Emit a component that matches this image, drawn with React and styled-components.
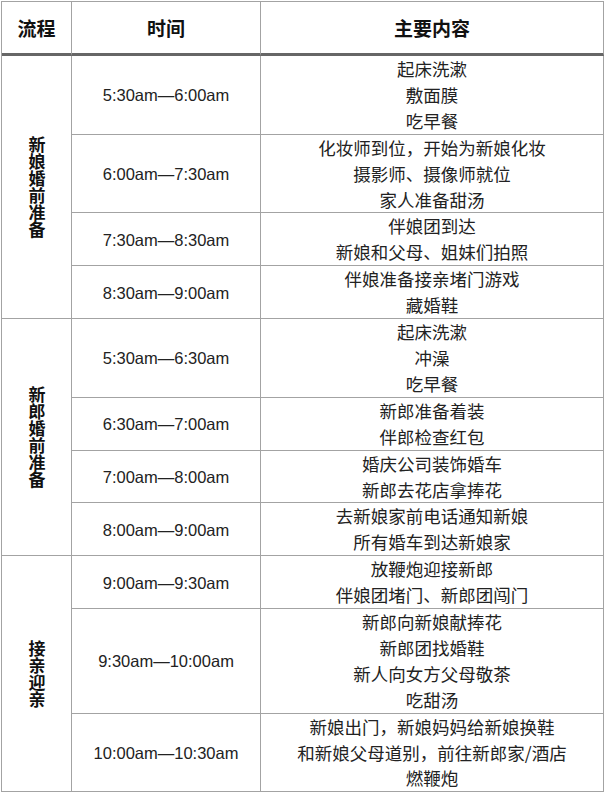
import React from "react";
import styled, { createGlobalStyle } from "styled-components";

const GlobalStyle = createGlobalStyle`
	html, body {
		margin: 0;
		padding: 0;
		background: #ffffff;
	}
	body {
		font-family: "Noto Sans CJK SC", "Liberation Sans", sans-serif;
		color: #1f1f1f;
	}
`;

const PageStyled = styled.div`
	padding: 1px 0 0 1px;
`;

const TableStyled = styled.div`
	display: grid;
	grid-template-columns: 70px 189px 343px;
	border-left: 1px solid #a3a3a3;
	border-top: 1px solid #a3a3a3;
	width: max-content;
`;

const HeadCell = styled.div`
	box-sizing: border-box;
	height: 54px;
	display: flex;
	align-items: center;
	justify-content: center;
	border-right: 1px solid #a3a3a3;
	border-bottom: 3px solid #666666;
	font-size: 19px;
	font-weight: 700;
	color: #111;
`;

const Cell = styled.div`
	box-sizing: border-box;
	display: flex;
	flex-direction: column;
	align-items: center;
	justify-content: center;
	border-right: 1px solid #a3a3a3;
	border-bottom: 1px solid #a3a3a3;
	text-align: center;
`;

const StageCell = styled(Cell)`
	grid-row: span ${(p) => p.$span};
`;

const StageText = styled.span`
	writing-mode: vertical-rl;
	text-orientation: upright;
	font-size: 17px;
	line-height: 18px;
	font-weight: 700;
	color: #111;
	letter-spacing: 0;
`;

const TimeCell = styled(Cell)`
	font-family: "Liberation Sans", Arial, sans-serif;
	font-size: 16.5px;
	color: #222;
	padding-top: 2px;
`;

const ContentCell = styled(Cell)`
	font-size: 17.5px;
	color: #222;
`;

const Line = styled.div`
	line-height: 25.9px;
	white-space: nowrap;
`;

const groups = [
	{
		stage: "新娘婚前准备",
		rows: [
			{ time: "5:30am—6:00am", items: ["起床洗漱", "敷面膜", "吃早餐"] },
			{ time: "6:00am—7:30am", items: ["化妆师到位，开始为新娘化妆", "摄影师、摄像师就位", "家人准备甜汤"] },
			{ time: "7:30am—8:30am", items: ["伴娘团到达", "新娘和父母、姐妹们拍照"] },
			{ time: "8:30am—9:00am", items: ["伴娘准备接亲堵门游戏", "藏婚鞋"] },
		],
	},
	{
		stage: "新郎婚前准备",
		rows: [
			{ time: "5:30am—6:30am", items: ["起床洗漱", "冲澡", "吃早餐"] },
			{ time: "6:30am—7:00am", items: ["新郎准备着装", "伴郎检查红包"] },
			{ time: "7:00am—8:00am", items: ["婚庆公司装饰婚车", "新郎去花店拿捧花"] },
			{ time: "8:00am—9:00am", items: ["去新娘家前电话通知新娘", "所有婚车到达新娘家"] },
		],
	},
	{
		stage: "接亲迎亲",
		rows: [
			{ time: "9:00am—9:30am", items: ["放鞭炮迎接新郎", "伴娘团堵门、新郎团闯门"] },
			{ time: "9:30am—10:00am", items: ["新郎向新娘献捧花", "新郎团找婚鞋", "新人向女方父母敬茶", "吃甜汤"] },
			{ time: "10:00am—10:30am", items: ["新娘出门，新娘妈妈给新娘换鞋", "和新娘父母道别，前往新郎家/酒店", "燃鞭炮"] },
		],
	},
];

function App() {
	return (
		<PageStyled>
			<GlobalStyle />
			<TableStyled>
				<HeadCell>流程</HeadCell>
				<HeadCell>时间</HeadCell>
				<HeadCell>主要内容</HeadCell>
				{groups.map((group) => (
					<React.Fragment key={group.stage}>
						<StageCell $span={group.rows.length}>
							<StageText>{group.stage}</StageText>
						</StageCell>
						{group.rows.map((row) => (
							<React.Fragment key={row.time}>
								<TimeCell>{row.time}</TimeCell>
								<ContentCell>
									{row.items.map((item) => (
										<Line key={item}>{item}</Line>
									))}
								</ContentCell>
							</React.Fragment>
						))}
					</React.Fragment>
				))}
			</TableStyled>
		</PageStyled>
	);
}

export default App;
